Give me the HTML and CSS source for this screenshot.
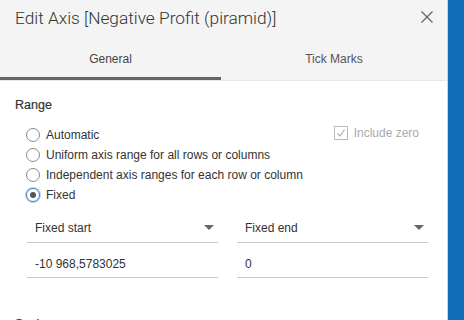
FILE: index.html
```html
<!DOCTYPE html>
<html>
<head>
<meta charset="utf-8">
<link rel="stylesheet" href="styles.css">
</head>
<body>
<div class="screen">
  <div class="dialog">
    <div class="header">
      <div class="title-row">
        <div class="title">Edit Axis [Negative Profit (piramid)]</div>
        <svg class="close" width="12" height="12" viewBox="0 0 12 12"><path d="M0.5 0.5L11.5 11.5M11.5 0.5L0.5 11.5" stroke="#666" stroke-width="1.3" fill="none"/></svg>
      </div>
      <div class="tabs">
        <div class="tab active">General</div>
        <div class="tab">Tick Marks</div>
      </div>
    </div>
    <div class="body">
      <div class="section-title">Range</div>
      <div class="options">
        <div class="opt-row">
          <label class="radio"><span class="circle"></span>Automatic</label>
          <label class="check"><span class="box"><svg width="10" height="10" viewBox="0 0 10 10"><path d="M1.5 5.5L4 8L8.5 1.5" stroke="#aaa" stroke-width="1.1" fill="none"/></svg></span>Include zero</label>
        </div>
        <label class="radio"><span class="circle"></span>Uniform axis range for all rows or columns</label>
        <label class="radio"><span class="circle"></span>Independent axis ranges for each row or column</label>
        <label class="radio checked"><span class="circle"></span>Fixed</label>
      </div>
      <div class="fields">
        <div class="col">
          <div class="select"><span>Fixed start</span><span class="arrow"></span></div>
          <div class="input">-10 968,5783025</div>
        </div>
        <div class="col">
          <div class="select"><span>Fixed end</span><span class="arrow"></span></div>
          <div class="input">0</div>
        </div>
      </div>
      <div class="section-title next">Scale</div>
    </div>
  </div>
  <div class="side"></div>
</div>
</body>
</html>
```
FILE: styles.css
```css
* { box-sizing: border-box; }
html, body { margin: 0; padding: 0; }
body {
  width: 464px;
  height: 320px;
  overflow: hidden;
  font-family: "Liberation Sans", Arial, sans-serif;
  color: #333;
  background: #fff;
}
.screen {
  display: flex;
  height: 320px;
  overflow: hidden;
}
.dialog {
  width: 448px;
  border-right: 1px solid #d4d4d4;
  background: #fff;
  display: flex;
  flex-direction: column;
}
.side {
  flex: 1;
  background: #0f6db5;
}
.header {
  background: #f4f4f4;
  border-bottom: 1px solid #e6e6e6;
}
.title-row {
  height: 34px;
  display: flex;
  align-items: center;
  justify-content: space-between;
  padding: 0 14px 0 15px;
}
.title {
  font-family: Roboto, "Liberation Sans", sans-serif;
  font-size: 17.3px;
  font-weight: 300;
  color: #333;
  padding-top: 1px;
}
.tabs {
  display: flex;
  height: 46px;
}
.tab {
  flex: 1;
  text-align: center;
  font-size: 12px;
  color: #555;
  padding-top: 18px;
}
.tab.active {
  border-bottom: 3px solid #666;
  color: #444;
  flex: 0 0 221px;
}
.body {
  padding: 17px 0 0 15px;
}
.section-title {
  font-size: 12.5px;
  color: #333;
  -webkit-text-stroke: 0.2px #333;
}
.options {
  margin-top: 13px;
  padding-left: 11px;
  display: flex;
  flex-direction: column;
}
.opt-row {
  display: flex;
  justify-content: space-between;
  padding-right: 28px;
}
.radio {
  display: flex;
  align-items: center;
  height: 20px;
  font-size: 12px;
  color: #333;
}
.circle {
  width: 14px;
  height: 14px;
  border: 1px solid #8a8a8a;
  border-radius: 50%;
  margin-right: 6px;
  position: relative;
  background: #fff;
}
.radio.checked .circle {
  border: 1px solid #3d82c4;
  box-shadow: 0 0 0 1px #b8d4ee;
}
.radio.checked .circle::after {
  content: "";
  position: absolute;
  left: 3px; top: 3px;
  width: 6px; height: 6px;
  border-radius: 50%;
  background: #555;
}
.check {
  display: flex;
  align-items: center;
  font-size: 12px;
  color: #aaa;
  margin-top: -4px;
}
.box {
  width: 14px; height: 14px;
  border: 1px solid #bbb;
  margin-right: 6px;
  margin-left: 1px;
  display: flex;
  align-items: center;
  justify-content: center;
}
.fields {
  display: flex;
  gap: 19px;
  margin-top: 10px;
  padding-left: 12px;
}
.col {
  width: 191px;
  display: flex;
  flex-direction: column;
}
.select, .input {
  border-bottom: 1px solid #c8c8c8;
  height: 28px;
  display: flex;
  align-items: center;
  justify-content: space-between;
  padding: 0 4px 2px 8px;
  font-size: 12px;
  color: #333;
}
.input { height: 35px; padding-top: 10px; }
.arrow {
  width: 0; height: 0;
  border-left: 5px solid transparent;
  border-right: 5px solid transparent;
  border-top: 5px solid #666;
}
.section-title.next { margin-top: 39px; }
```
